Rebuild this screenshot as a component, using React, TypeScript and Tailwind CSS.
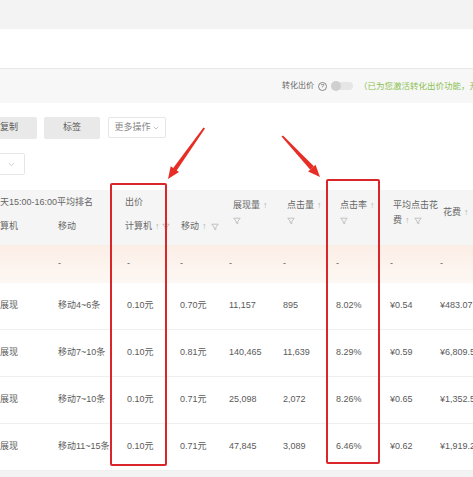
import { ChevronDown } from "lucide-react";

const cols = "grid grid-cols-[58px_67px_53px_51px_54px_52px_55px_50px_60px]";

const rows = [
  ["展现", "移动4~6条", "0.10元", "0.70元", "11,157", "895", "8.02%", "¥0.54", "¥483.07"],
  ["展现", "移动7~10条", "0.10元", "0.81元", "140,465", "11,639", "8.29%", "¥0.59", "¥6,809.5"],
  ["展现", "移动7~10条", "0.10元", "0.71元", "25,098", "2,072", "8.26%", "¥0.65", "¥1,352.5"],
  ["展现", "移动11~15条", "0.10元", "0.71元", "47,845", "3,089", "6.46%", "¥0.62", "¥1,919.2"],
];

const pads = ["pl-0", "pl-0", "pl-[2px]", "pl-[2px]", "pl-0", "pl-0", "pl-[1px]", "pl-0", "pl-0"];

function Funnel() {
  return (
    <svg width="8" height="8" viewBox="0 0 10 10" className="inline-block">
      <path d="M1 1.5h8L6 5.5v3L4 7.5v-2z" fill="none" stroke="#b5b5b5" strokeWidth="1" strokeLinejoin="round" />
    </svg>
  );
}

function Up() {
  return <span className="text-[#b0b0b0] ml-[3px]">↑</span>;
}

export default function App() {
  return (
    <div className="relative w-[473px] h-[477px] overflow-hidden bg-white font-['Liberation_Sans','Noto_Sans_CJK_SC',sans-serif] text-[9px] text-[#5a5a5a]">
      <div className="h-[29px] bg-[#f3f3f3]" />
      <div className="h-[39px] bg-white" />

      {/* toolbar band */}
      <div className="h-[35px] bg-[#f7f7f7] border-t border-[#e8e8e8] flex items-center whitespace-nowrap text-[8px]">
        <div className="ml-[282px] flex items-center shrink-0 text-[#666]">
          <span className="shrink-0">转化出价</span>
          <span className="shrink-0 ml-[4px] w-[9px] h-[9px] rounded-full border border-[#888] text-[6px] leading-[7px] text-center">?</span>
          <span className="shrink-0 ml-[4px] relative w-[22px] h-[8px] rounded-full bg-[#e6e6e6]">
            <span className="absolute left-0 top-[-1px] w-[10px] h-[10px] rounded-full bg-[#cfcfcf]" />
          </span>
          <span className="shrink-0 ml-[6px] text-[#8cc152] text-[8.5px]">（已为您激活转化出价功能，开</span>
        </div>
      </div>

      {/* buttons */}
      <div className="flex gap-[7px] pt-[14px]">
        <div className="-ml-[19px] w-[56px] h-[22px] bg-[#e9e9e9] rounded-[2px] flex items-center justify-center">复制</div>
        <div className="w-[56px] h-[22px] bg-[#e9e9e9] rounded-[2px] flex items-center justify-center">标签</div>
        <div className="ml-[1px] w-[58px] h-[21px] bg-white border border-[#e6e6e6] rounded-[2px] flex items-center justify-center text-[#888]">
          更多操作<ChevronDown size={8} strokeWidth={1.5} className="ml-[1px]" />
        </div>
      </div>

      <div className="mt-[14px] -ml-[10px] w-[35px] h-[22px] border border-[#e6e6e6] rounded-[2px] bg-white flex items-center justify-end pr-[8px]">
        <ChevronDown size={9} strokeWidth={1.3} className="text-[#999]" />
      </div>

      {/* table */}
      <div className="mt-[15px]">
        <div className={`${cols} grid-rows-[26px_29px] h-[55px] bg-[#f5f5f5] text-[#666]`}>
          <div className="col-span-2 flex items-center whitespace-nowrap">天15:00-16:00平均排名</div>
          <div className="col-span-2 flex items-center">出价</div>
          <div className="row-span-2 pl-[4px] pt-[8px] leading-[15px]">
            <div>展现量<Up /></div>
            <div><Funnel /></div>
          </div>
          <div className="row-span-2 pl-[4px] pt-[8px] leading-[15px]">
            <div>点击量<Up /></div>
            <div><Funnel /></div>
          </div>
          <div className="row-span-2 pl-[5px] pt-[8px] leading-[15px]">
            <div>点击率<Up /></div>
            <div><Funnel /></div>
          </div>
          <div className="row-span-2 pl-[3px] pt-[8px] leading-[15px] whitespace-nowrap">
            <div>平均点击花</div>
            <div>费<Up /> <span className="ml-[2px]"><Funnel /></span></div>
          </div>
          <div className="row-span-2 pl-[3px] pt-[15px] leading-[15px]">花费<Up /></div>
          <div className="pt-[4px]">算机</div>
          <div className="pt-[4px]">移动</div>
          <div className="pt-[4px] whitespace-nowrap">计算机<Up /> <Funnel /></div>
          <div className="pt-[4px] pl-[3px] whitespace-nowrap">移动<Up /> <span className="ml-[2px]"><Funnel /></span></div>
        </div>

        <div className={`${cols} h-[38px] items-center bg-gradient-to-b from-[#fbeee6] to-[#fdf8f4]`}>
          {["", "-", "-", "-", "-", "-", "-", "-", "-"].map((v, i) => (
            <div key={i} className={pads[i]}>{v}</div>
          ))}
        </div>

        {rows.map((r, ri) => (
          <div key={ri} className={`${cols} h-[47px] items-center border-b border-[#efefef] bg-white`}>
            {r.map((v, i) => (
              <div key={i} className={`${pads[i]} whitespace-nowrap`}>{v}</div>
            ))}
          </div>
        ))}
        <div className="h-[20px] bg-[#f3f3f3]" />
      </div>

      {/* highlight boxes */}
      <div className="absolute left-[110px] top-[183px] w-[57px] h-[283px] border-2 border-[#d8262b] rounded-[2px]" />
      <div className="absolute left-[326px] top-[179px] w-[54px] h-[285px] border-2 border-[#d8262b] rounded-[2px]" />

      {/* arrows */}
      <svg className="absolute left-0 top-0 pointer-events-none" width="473" height="477">
        <polygon points="203.5,127.5 205,128.5 176.3,171 172.8,168.6" fill="#e62e26" />
        <polygon points="168,179 179,171.9 170.7,166.2" fill="#e62e26" />
        <polygon points="281.5,136.5 283,135.5 313.8,166.2 310.3,169.8" fill="#e62e26" />
        <polygon points="320,177 315.5,164.8 308.1,171.6" fill="#e62e26" />
      </svg>
    </div>
  );
}
